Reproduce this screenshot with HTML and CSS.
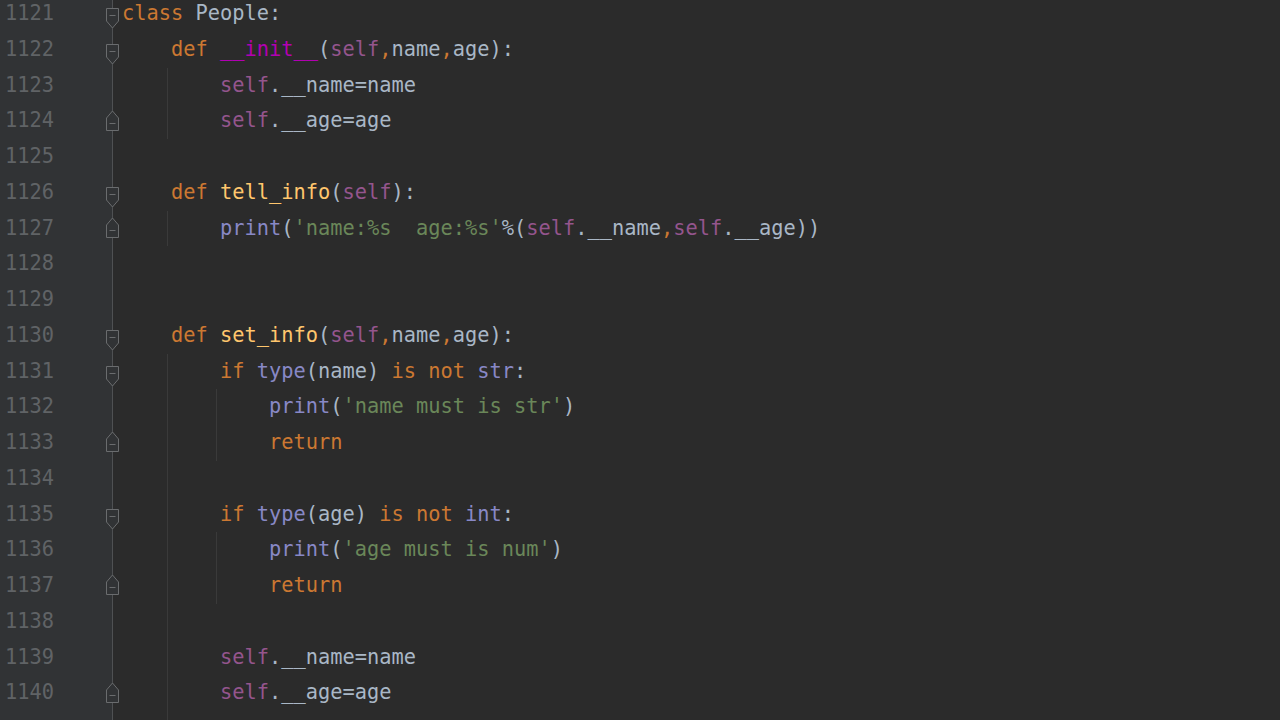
FILE: index.html
```html
<!DOCTYPE html>
<html>
<head>
<meta charset="utf-8">
<link rel="stylesheet" href="styles.css">
</head>
<body>
<div class="editor">
  <div class="row"><span class="num">1121</span><span class="fold"><svg class="fm" viewBox="0 0 13 21"><path d="M0.5 0.5H12.5V13L6.5 20L0.5 13Z"/><path class="minus" d="M3.5 7.5H9.5"/></svg></span><span class="code"><span class="k">class</span> People:</span></div>
  <div class="row"><span class="num">1122</span><span class="fold"><svg class="fm" viewBox="0 0 13 21"><path d="M0.5 0.5H12.5V13L6.5 20L0.5 13Z"/><path class="minus" d="M3.5 7.5H9.5"/></svg></span><span class="code"><span class="i"></span><span class="k">def</span> <span class="m">__init__</span>(<span class="s">self</span><span class="k">,</span>name<span class="k">,</span>age):</span></div>
  <div class="row"><span class="num">1123</span><span class="fold"></span><span class="code"><span class="i g"></span><span class="i"></span><span class="s">self</span>.__name=name</span></div>
  <div class="row"><span class="num">1124</span><span class="fold"><svg class="fm end" viewBox="0 0 13 21"><path d="M0.5 20.5H12.5V8L6.5 1L0.5 8Z"/><path class="minus" d="M3.5 13.5H9.5"/></svg></span><span class="code"><span class="i g"></span><span class="i"></span><span class="s">self</span>.__age=age</span></div>
  <div class="row"><span class="num">1125</span><span class="fold"></span><span class="code"></span></div>
  <div class="row"><span class="num">1126</span><span class="fold"><svg class="fm" viewBox="0 0 13 21"><path d="M0.5 0.5H12.5V13L6.5 20L0.5 13Z"/><path class="minus" d="M3.5 7.5H9.5"/></svg></span><span class="code"><span class="i"></span><span class="k">def</span> <span class="f">tell_info</span>(<span class="s">self</span>):</span></div>
  <div class="row"><span class="num">1127</span><span class="fold"><svg class="fm end" viewBox="0 0 13 21"><path d="M0.5 20.5H12.5V8L6.5 1L0.5 8Z"/><path class="minus" d="M3.5 13.5H9.5"/></svg></span><span class="code"><span class="i g"></span><span class="i"></span><span class="b">print</span>(<span class="str">'name:%s  age:%s'</span>%(<span class="s">self</span>.__name<span class="k">,</span><span class="s">self</span>.__age))</span></div>
  <div class="row"><span class="num">1128</span><span class="fold"></span><span class="code"></span></div>
  <div class="row"><span class="num">1129</span><span class="fold"></span><span class="code"></span></div>
  <div class="row"><span class="num">1130</span><span class="fold"><svg class="fm" viewBox="0 0 13 21"><path d="M0.5 0.5H12.5V13L6.5 20L0.5 13Z"/><path class="minus" d="M3.5 7.5H9.5"/></svg></span><span class="code"><span class="i"></span><span class="k">def</span> <span class="f">set_info</span>(<span class="s">self</span><span class="k">,</span>name<span class="k">,</span>age):</span></div>
  <div class="row"><span class="num">1131</span><span class="fold"><svg class="fm" viewBox="0 0 13 21"><path d="M0.5 0.5H12.5V13L6.5 20L0.5 13Z"/><path class="minus" d="M3.5 7.5H9.5"/></svg></span><span class="code"><span class="i g"></span><span class="i"></span><span class="k">if</span> <span class="b">type</span>(name) <span class="k">is not</span> <span class="b">str</span>:</span></div>
  <div class="row"><span class="num">1132</span><span class="fold"></span><span class="code"><span class="i g"></span><span class="i g"></span><span class="i"></span><span class="b">print</span>(<span class="str">'name must is str'</span>)</span></div>
  <div class="row"><span class="num">1133</span><span class="fold"><svg class="fm end" viewBox="0 0 13 21"><path d="M0.5 20.5H12.5V8L6.5 1L0.5 8Z"/><path class="minus" d="M3.5 13.5H9.5"/></svg></span><span class="code"><span class="i g"></span><span class="i g"></span><span class="i"></span><span class="k">return</span></span></div>
  <div class="row"><span class="num">1134</span><span class="fold"></span><span class="code"><span class="i g"></span></span></div>
  <div class="row"><span class="num">1135</span><span class="fold"><svg class="fm" viewBox="0 0 13 21"><path d="M0.5 0.5H12.5V13L6.5 20L0.5 13Z"/><path class="minus" d="M3.5 7.5H9.5"/></svg></span><span class="code"><span class="i g"></span><span class="i"></span><span class="k">if</span> <span class="b">type</span>(age) <span class="k">is not</span> <span class="b">int</span>:</span></div>
  <div class="row"><span class="num">1136</span><span class="fold"></span><span class="code"><span class="i g"></span><span class="i g"></span><span class="i"></span><span class="b">print</span>(<span class="str">'age must is num'</span>)</span></div>
  <div class="row"><span class="num">1137</span><span class="fold"><svg class="fm end" viewBox="0 0 13 21"><path d="M0.5 20.5H12.5V8L6.5 1L0.5 8Z"/><path class="minus" d="M3.5 13.5H9.5"/></svg></span><span class="code"><span class="i g"></span><span class="i g"></span><span class="i"></span><span class="k">return</span></span></div>
  <div class="row"><span class="num">1138</span><span class="fold"></span><span class="code"><span class="i g"></span></span></div>
  <div class="row"><span class="num">1139</span><span class="fold"></span><span class="code"><span class="i g"></span><span class="i"></span><span class="s">self</span>.__name=name</span></div>
  <div class="row"><span class="num">1140</span><span class="fold"><svg class="fm end" viewBox="0 0 13 21"><path d="M0.5 20.5H12.5V8L6.5 1L0.5 8Z"/><path class="minus" d="M3.5 13.5H9.5"/></svg></span><span class="code"><span class="i g"></span><span class="i"></span><span class="s">self</span>.__age=age</span></div>
  <div class="row"><span class="num"></span><span class="fold"></span><span class="code"><span class="i g"></span></span></div>
</div>
</body>
</html>
```
FILE: styles.css
```css
html, body {
  margin: 0;
  padding: 0;
  height: 100%;
  overflow: hidden;
  background: #2b2b2b;
}
.editor {
  margin-top: -4px;
  min-height: 730px;
  background: linear-gradient(to right, #313335 0, #313335 112px, #4f5153 112px, #4f5153 113px, #2b2b2b 113px);
  font-family: "DejaVu Sans Mono", "Liberation Mono", monospace;
  font-size: 20.35px;
  color: #a9b7c6;
}
.row {
  display: flex;
  height: 35.76px;
  line-height: 35.76px;
  white-space: pre;
}
.num {
  width: 54px;
  text-align: right;
  color: #606366;
}
.fold {
  width: 13px;
  margin-left: 52px;
  margin-right: 3px;
  display: flex;
  align-items: center;
  justify-content: center;
}
.fm {
  width: 13px;
  height: 21px;
  margin-top: 10px;
}
.fm.end {
  margin-top: 0;
  margin-bottom: 2px;
}
.fm path {
  fill: #313335;
  stroke: #6a6c6e;
  stroke-width: 1;
}
.fm .minus {
  fill: none;
}
.code {
  display: block;
}
.i {
  display: inline-block;
  vertical-align: top;
  width: 4ch;
  height: 35.76px;
}
.i.g {
  background: linear-gradient(#3a3a3a, #3a3a3a) no-repeat 45px 0 / 1px 100%;
}
.k { color: #cc7832; }
.m { color: #b200b2; }
.s { color: #94558d; }
.f { color: #ffc66d; }
.b { color: #8888c6; }
.str { color: #6a8759; }
```
